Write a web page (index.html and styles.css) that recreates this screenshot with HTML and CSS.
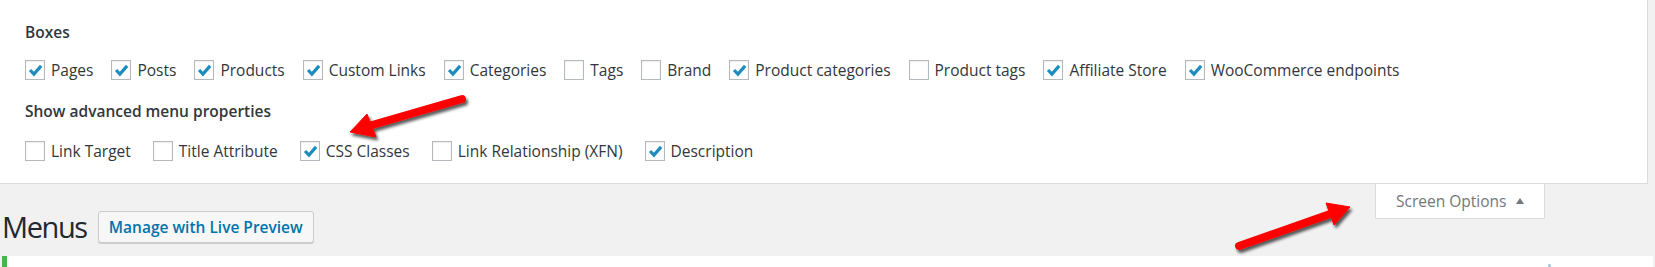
FILE: index.html
```html
<!DOCTYPE html>
<html lang="en">

<head>
    <meta charset="UTF-8">
    <title>Menus</title>
    <link rel="stylesheet" href="styles.css">
</head>

<body>
    <div class="screen-meta">
        <h5 class="legend">Boxes</h5>
        <div class="prefs">
            <label class="pref"><span class="box"><svg class="tick" viewBox="0 0 20 20"><polyline points="4.5,10 8.8,14.5 16.8,5.5" /></svg></span>Pages</label>
            <label class="pref"><span class="box"><svg class="tick" viewBox="0 0 20 20"><polyline points="4.5,10 8.8,14.5 16.8,5.5" /></svg></span>Posts</label>
            <label class="pref"><span class="box"><svg class="tick" viewBox="0 0 20 20"><polyline points="4.5,10 8.8,14.5 16.8,5.5" /></svg></span>Products</label>
            <label class="pref"><span class="box"><svg class="tick" viewBox="0 0 20 20"><polyline points="4.5,10 8.8,14.5 16.8,5.5" /></svg></span>Custom Links</label>
            <label class="pref"><span class="box"><svg class="tick" viewBox="0 0 20 20"><polyline points="4.5,10 8.8,14.5 16.8,5.5" /></svg></span>Categories</label>
            <label class="pref"><span class="box"></span>Tags</label>
            <label class="pref"><span class="box"></span>Brand</label>
            <label class="pref"><span class="box"><svg class="tick" viewBox="0 0 20 20"><polyline points="4.5,10 8.8,14.5 16.8,5.5" /></svg></span>Product categories</label>
            <label class="pref"><span class="box"></span>Product tags</label>
            <label class="pref"><span class="box"><svg class="tick" viewBox="0 0 20 20"><polyline points="4.5,10 8.8,14.5 16.8,5.5" /></svg></span>Affiliate Store</label>
            <label class="pref"><span class="box"><svg class="tick" viewBox="0 0 20 20"><polyline points="4.5,10 8.8,14.5 16.8,5.5" /></svg></span>WooCommerce endpoints</label>
        </div>

        <h5 class="legend">Show advanced menu properties</h5>
        <div class="prefs prefs-advanced">
            <label class="pref"><span class="box"></span>Link Target</label>
            <label class="pref"><span class="box"></span>Title Attribute</label>
            <label class="pref"><span class="box"><svg class="tick" viewBox="0 0 20 20"><polyline points="4.5,10 8.8,14.5 16.8,5.5" /></svg></span>CSS Classes</label>
            <label class="pref"><span class="box"></span>Link Relationship (XFN)</label>
            <label class="pref"><span class="box"><svg class="tick" viewBox="0 0 20 20"><polyline points="4.5,10 8.8,14.5 16.8,5.5" /></svg></span>Description</label>
        </div>
    </div>

    <div class="head-area">
        <div class="title-row">
            <h1>Menus</h1>
            <a class="button" href="#">Manage with Live Preview</a>
        </div>
        <div class="tab">Screen Options <span class="caret"></span></div>
    </div>

    <div class="notice">
        <span class="dismiss"></span>
    </div>

    <!-- annotation arrows drawn over the screenshot -->
    <svg class="arrows" width="1655" height="267" viewBox="0 0 1655 267">
        <defs>
            <filter id="shadow" x="-20%" y="-50%" width="140%" height="200%">
                <feDropShadow dx="2" dy="3" stdDeviation="1.6" flood-color="#000" flood-opacity="0.65" />
            </filter>
        </defs>
        <g filter="url(#shadow)" fill="#ff0000" stroke="#ff0000">
            <line x1="462" y1="99" x2="372" y2="125" stroke-width="8" stroke-linecap="round" />
            <polygon points="350,132 367,114 376,137" stroke-width="1" stroke-linejoin="round" />

            <line x1="1239" y1="246" x2="1330" y2="214" stroke-width="8" stroke-linecap="round" />
            <polygon points="1350,207 1326,203 1334,225" stroke-width="1" stroke-linejoin="round" />
        </g>
    </svg>
</body>

</html>
```

FILE: styles.css
```css
body {
    margin: 0;
    background: #f1f1f1;
    font-family: "Open Sans", "Noto Sans", sans-serif;
    color: #32373c;
    position: relative;
    height: 267px;
    overflow: hidden;
}

.screen-meta {
    width: 1648px;
    height: 184px;
    box-sizing: border-box;
    background: #fff;
    border-right: 1px solid #dcdcdc;
    border-bottom: 1px solid #dcdcdc;
    padding: 21px 0 0 25px;
}

.legend {
    margin: 0;
    height: 22px;
    line-height: 22px;
    font-size: 15.5px;
    font-weight: 600;
    color: #32373c;
}

.prefs {
    display: flex;
    gap: 18px;
    height: 34px;
    align-items: center;
    margin: 10px 0 13px;
}

.prefs-advanced {
    gap: 22px;
    margin: 12px 0 0;
}

.pref {
    display: flex;
    align-items: center;
    gap: 6px;
    font-size: 15.5px;
    white-space: nowrap;
}

.box {
    width: 20px;
    height: 20px;
    box-sizing: border-box;
    border: 1px solid #b4b9be;
    background: #fff;
    box-shadow: inset 0 1px 2px rgba(0, 0, 0, 0.07);
    display: flex;
}

.tick {
    width: 18px;
    height: 18px;
}

.tick polyline {
    fill: none;
    stroke: #1e8cbe;
    stroke-width: 3.6;
}

.head-area {
    display: flex;
    justify-content: space-between;
    align-items: flex-start;
    height: 72px;
}

.title-row {
    display: flex;
    align-items: center;
    height: 32px;
    margin-top: 27px;
    padding-left: 2px;
}

h1 {
    margin: 0 11px 0 0;
    font-size: 29px;
    font-weight: 400;
    line-height: 32px;
    color: #23282d;
    letter-spacing: -1.4px;
}

.button {
    display: block;
    height: 32px;
    box-sizing: border-box;
    padding: 0 10px;
    line-height: 30px;
    font-size: 15.5px;
    font-weight: 600;
    color: #0073aa;
    text-decoration: none;
    background: #f7f7f7;
    border: 1px solid #cccccc;
    border-radius: 3px;
    box-shadow: 0 1px 0 #cccccc;
}

.tab {
    width: 170px;
    height: 35px;
    box-sizing: border-box;
    margin-right: 110px;
    background: #fff;
    border: 1px solid #dcdcdc;
    border-top: none;
    font-size: 15.5px;
    color: #72777c;
    line-height: 34px;
    padding-left: 20px;
}

.caret {
    display: inline-block;
    width: 0;
    height: 0;
    margin-left: 6px;
    border-left: 4px solid transparent;
    border-right: 4px solid transparent;
    border-bottom: 6px solid #72777c;
    vertical-align: 3px;
}

.notice {
    position: relative;
    width: 1646px;
    height: 20px;
    margin-left: 2px;
    background: #fff;
    border-left: 5px solid #46b450;
}

.dismiss {
    position: absolute;
    left: 1541px;
    top: 8px;
    width: 3px;
    height: 3px;
    border-radius: 50%;
    background: #9ec2d8;
}

.arrows {
    position: absolute;
    left: 0;
    top: 0;
    pointer-events: none;
}
```
